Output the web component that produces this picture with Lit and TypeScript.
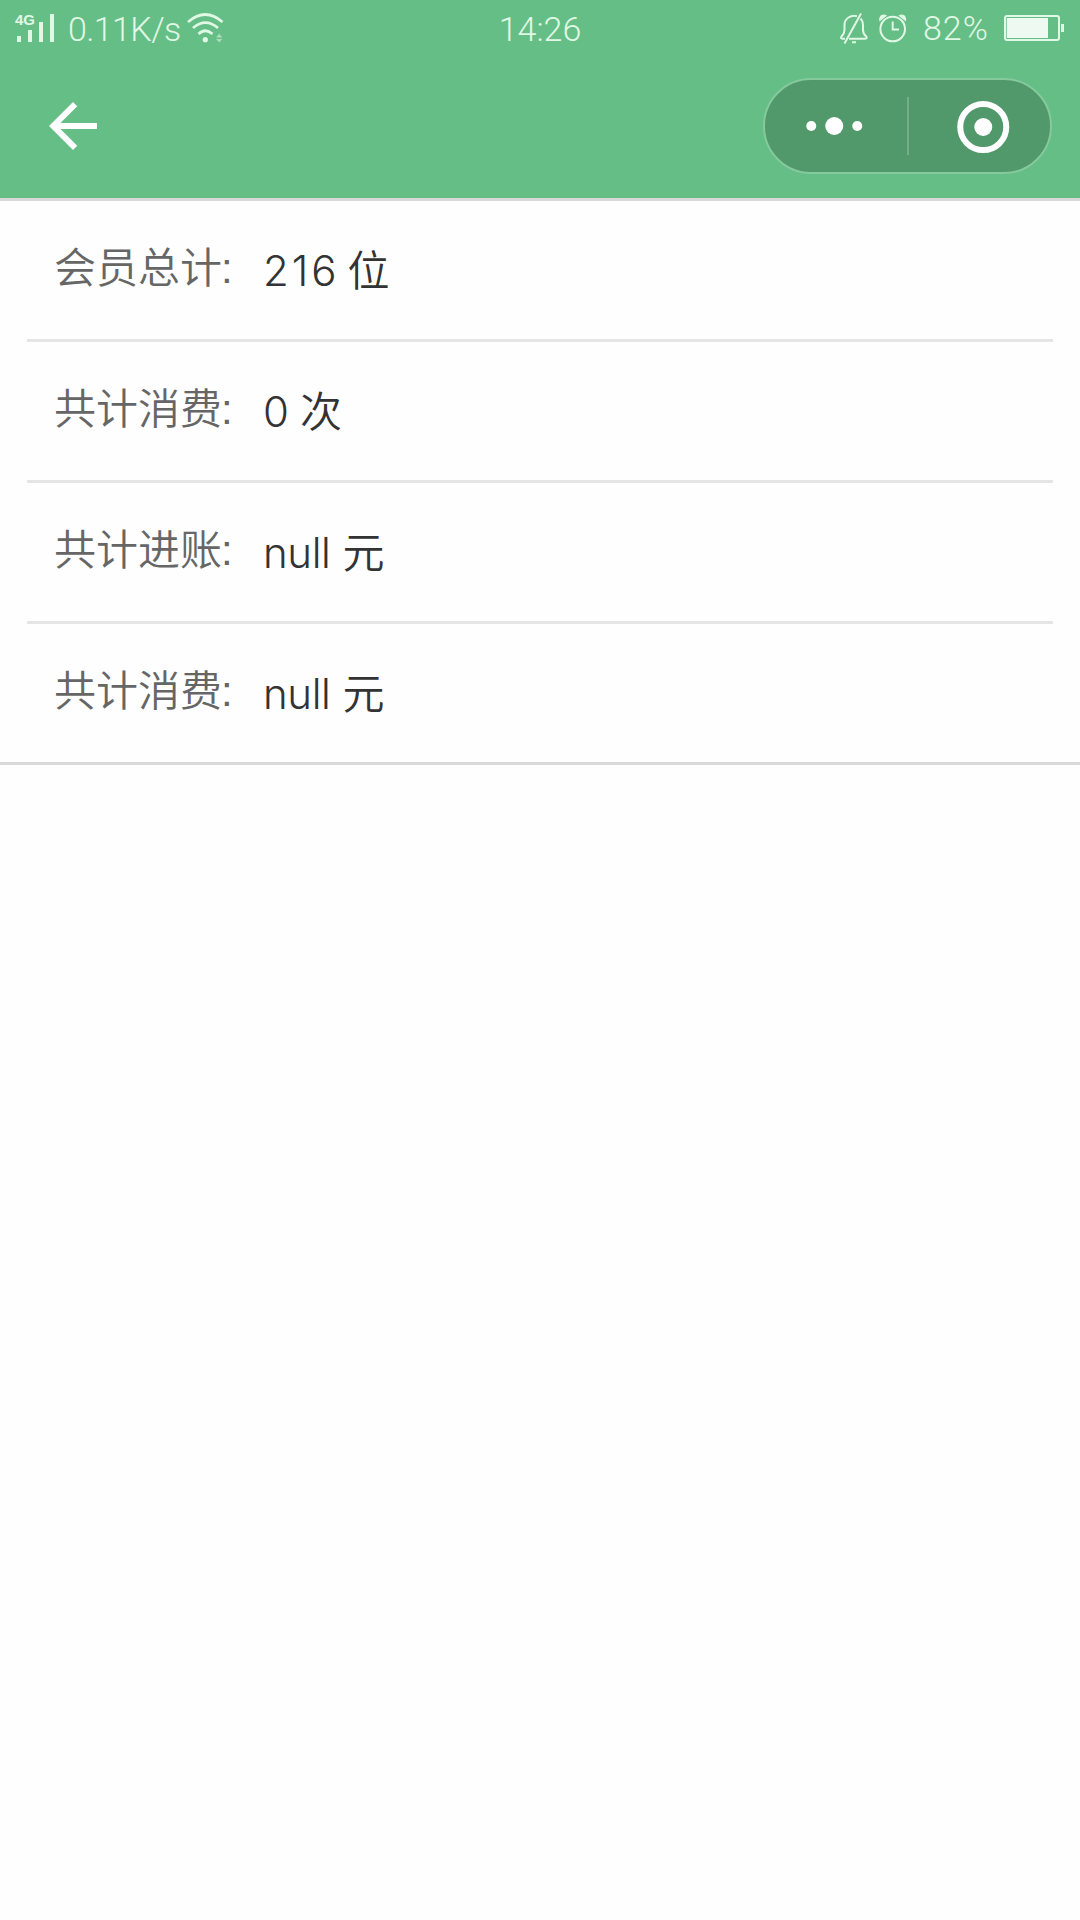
import { LitElement, html, css } from "lit";
import { customElement, property } from "lit/decorators.js";

@customElement("status-bar")
class StatusBar extends LitElement {
  static styles = css`
    :host {
      display: grid;
      grid-template-columns: 1fr auto 1fr;
      align-items: center;
      height: 56px;
      font-family: Roboto, "Liberation Sans", sans-serif;
      font-weight: 350;
      font-size: 34px;
      line-height: 56px;
      color: #e0f8e4;
      white-space: nowrap;
    }
    svg { display: block; flex: none; }
    .left, .right { display: flex; align-items: center; height: 56px; }
    .left { padding-left: 16px; }
    .right { justify-content: flex-end; padding-right: 14px; }
    .signal { position: relative; width: 40px; height: 56px; }
    .network {
      position: absolute;
      left: -1px;
      top: 10px;
      font: 700 15px/17px "Liberation Sans", sans-serif;
    }
    .speed { width: 116px; margin-left: 12px; letter-spacing: -0.6px; }
    .time { padding-top: 1px; }
    .percent { width: 67px; margin: 0 14px 0 9px; padding-bottom: 2px; letter-spacing: 1px; }
  `;

  render() {
    return html`
      <div class="left">
        <div class="signal">
          <svg width="40" height="56" fill="currentColor">
            <rect x="1" y="35" width="4" height="6" />
            <rect x="12" y="29" width="4" height="12" />
            <rect x="23" y="21" width="4" height="20" />
            <rect x="34" y="13" width="4" height="28" />
          </svg>
          <span class="network">4G</span>
        </div>
        <span class="speed">0.11K/s</span>
        <svg width="42" height="56" fill="none" stroke="currentColor" stroke-width="2.7">
          <path d="M4 21Q21.300 6 38.500 21M9 27Q21.300 16.200 34 27M14.500 33Q21.300 26.500 28.500 33" />
          <circle cx="21.300" cy="38.700" r="2.600" fill="currentColor" stroke="none" />
          <path d="M32 36.500l3.200-3.800 3.200 3.800zM32 38l3.200 3.400 3.200-3.400z" fill="currentColor" stroke="none" opacity=".55" />
        </svg>
      </div>
      <span class="time">14:26</span>
      <div class="right">
        <svg width="32" height="56" fill="none" stroke="currentColor" stroke-width="2">
          <path d="M19 15.300C13 13.500 6.500 17.500 6.500 24V29C6.500 32 5.500 33.500 3.500 35.500C2.500 37 3 37.700 4.500 37.700H7M11 37.700H27C29 37.700 29.200 36.500 28 35.300C26 33.500 25 32 25 29V24C25 21 24 19 22.500 17.500M6.500 42.500L23 12.500M14 41.300h4" />
        </svg>
        <svg width="44" height="56" fill="none" stroke="currentColor" stroke-width="2">
          <circle cx="22.700" cy="28" r="12.300" />
          <path d="M22.700 20.500V28.500H29" />
          <path d="M9.500 20.500C8 15 12.500 12 17 14.500zM35.900 20.500C37.400 15 32.900 12 28.400 14.500z" fill="currentColor" stroke="none" />
        </svg>
        <span class="percent">82%</span>
        <svg width="62" height="56">
          <rect x="1" y="15" width="54" height="24" rx="2" fill="none" stroke="currentColor" stroke-width="2" />
          <rect x="2.700" y="17" width="41.300" height="20" fill="#eef9f2" />
          <rect x="57" y="23" width="3" height="8" fill="currentColor" />
        </svg>
      </div>
    `;
  }
}

@customElement("nav-bar")
class NavBar extends LitElement {
  static styles = css`
    :host {
      box-sizing: border-box;
      display: flex;
      justify-content: space-between;
      align-items: flex-start;
      height: 142px;
      padding: 22px 28px 0 37px;
      color: #fff;
    }
    svg { display: block; }
    .back { margin-top: 12px; }
    .capsule {
      box-sizing: border-box;
      display: flex;
      align-items: center;
      width: 289px;
      height: 96px;
      border: 2px solid #85c99c;
      border-radius: 48px;
      background: #51986a;
    }
    .half { flex: 1; }
    .divider { width: 2px; height: 58px; background: #74ad88; }
  `;

  render() {
    return html`
      <svg class="back" width="72" height="72" viewBox="0 0 24 24" fill="currentColor">
        <path d="M20 11H7.830l5.590-5.590L12 4l-8 8 8 8 1.410-1.410L7.830 13H20z" />
      </svg>
      <div class="capsule">
        <svg class="half" height="92" viewBox="0 0 141 92" fill="currentColor">
          <circle cx="46" cy="46" r="5" />
          <circle cx="69" cy="46" r="9" />
          <circle cx="92" cy="46" r="5" />
        </svg>
        <div class="divider"></div>
        <svg class="half" height="92" viewBox="0 0 141 92">
          <circle cx="74" cy="47" r="23" fill="none" stroke="currentColor" stroke-width="6" />
          <circle cx="74" cy="47" r="9" fill="currentColor" />
        </svg>
      </div>
    `;
  }
}

@customElement("stat-row")
class StatRow extends LitElement {
  @property() label = "";
  @property() value = "";
  @property() unit = "";

  static styles = css`
    :host {
      display: flex;
      height: 138px;
      padding-left: 27px;
      font-family: Inter, "Noto Sans CJK SC", sans-serif;
      font-weight: 350;
      font-size: 42px;
      line-height: 60px;
      white-space: nowrap;
    }
    .label { width: 209px; padding-top: 37px; color: #666; }
    .colon { margin-left: -1px; font-family: "Liberation Sans", sans-serif; }
    .amount { display: flex; padding-top: 40px; color: #333; }
    .value { margin-right: 12px; letter-spacing: -0.4px; }
    .value.number { margin-right: 8px; letter-spacing: 3px; }
  `;

  render() {
    const numeric = /^\d+$/.test(this.value);
    return html`
      <span class="label">${this.label}<span class="colon">:</span></span>
      <span class="amount"><span class="value ${numeric ? "number" : ""}">${this.value}</span><span>${this.unit}</span></span>
    `;
  }
}

@customElement("app-root")
class AppRoot extends LitElement {
  static styles = css`
    :host { display: block; min-height: 1920px; background: #fefefe; }
    .header { background: #65be86; }
    .list {
      padding: 0 27px;
      border-top: 3px solid #d9d9d9;
      border-bottom: 3px solid #d9d9d9;
    }
    .row + .row { border-top: 3px solid #e5e5e5; }
  `;

  private rows = [
    ["会员总计", "216", "位"],
    ["共计消费", "0", "次"],
    ["共计进账", "null", "元"],
    ["共计消费", "null", "元"],
  ];

  render() {
    return html`
      <header class="header">
        <status-bar></status-bar>
        <nav-bar></nav-bar>
      </header>
      <main class="list">
        ${this.rows.map(
          ([label, value, unit]) => html`
            <stat-row class="row" .label=${label} .value=${value} .unit=${unit}></stat-row>
          `
        )}
      </main>
    `;
  }
}
